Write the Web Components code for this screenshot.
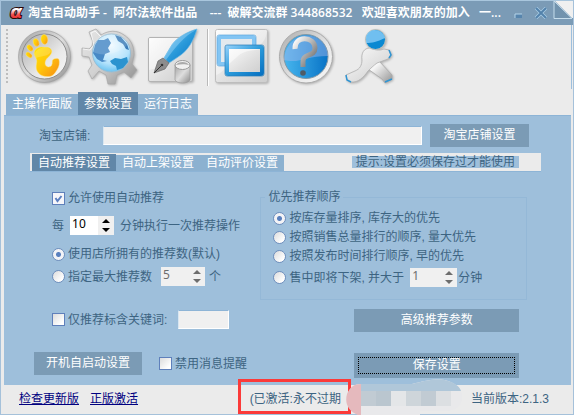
<!DOCTYPE html>
<html lang="zh-CN">
<head>
<meta charset="utf-8">
<title>淘宝自动助手</title>
<style>
  body {
    margin: 0;
    --panel: #9ebfdb;
    --line: #8db4d6;
    --chrome: #ebebeb;
    --button: #7b9bb5;
    --tab: #8cb1d0;
    --tab-active: #6187a8;
    --text: #3d6482;
    font: 12px/14px "Liberation Sans", "Noto Sans CJK SC", sans-serif;
    color: var(--text);
  }
</style>
</head>
<body>
<helper-app></helper-app>

<script>
class TitleBar extends HTMLElement {
  constructor() {
    super();
    this.attachShadow({ mode: 'open' });
    this.shadowRoot.innerHTML = `
      <style>
        :host {
          display: flex;
          height: 25px;
          box-sizing: border-box;
          border-top: 1px solid #a9c6dd;
          background: #7b9bb6;
          color: #fff;
        }
        .logo { margin: 0 0 0 7px; flex: none; }
        h1 {
          flex: 1;
          min-width: 0;
          margin: 0;
          font: 600 12px/24px "Open Sans", "Noto Sans CJK SC", sans-serif;
          white-space: pre;
          overflow: hidden;
          text-overflow: ellipsis;
        }
        button {
          width: 22px;
          padding: 0;
          border: 0;
          background: none;
        }
        button svg { display: block; margin: 0 auto; }
        .curl { flex: none; margin-left: 1px; }
      </style>
      <svg class="logo" width="20" height="24" viewBox="0 0 20 24" aria-hidden="true">
        <defs>
          <linearGradient id="red" x1="0" y1="0" x2="0" y2="1">
            <stop offset=".4" stop-color="#fff"/><stop offset=".65" stop-color="#f05050"/><stop offset="1" stop-color="#e01010"/>
          </linearGradient>
        </defs>
        <text x="2" y="17" font-family="DejaVu Sans, sans-serif" font-size="18" font-weight="bold" font-style="italic"
          fill="url(#red)" stroke="#2a0808" stroke-width="2" paint-order="stroke">α</text>
      </svg>
      <h1><slot></slot></h1>
      <button aria-label="最小化"><svg width="10" height="12"><path d="M1 7h7v4H1z" fill="#5785ad"/><path d="M1 11V7h7" fill="none" stroke="#b5d4ea"/></svg></button>
      <button aria-label="关闭"><svg width="14" height="12"><path d="M2 1l10 10M12 1L2 11" stroke="#a9cde6" stroke-width="3.4"/><path d="M2 1l10 10M12 1L2 11" stroke="#5382ab" stroke-width="2"/></svg></button>
      <svg class="curl" width="20" height="24" viewBox="0 0 20 24">
        <path d="M1-1L19 17H20V-1z" fill="#f0f0f0"/>
        <path d="M1 0V17.500H19z" fill="#7193ae" stroke="#c5ddec"/>
      </svg>
    `;
  }
}

class TabStrip extends HTMLElement {
  constructor() {
    super();
    this.attachShadow({ mode: 'open' });
    const tabs = this.getAttribute('tabs').split(',');
    this.shadowRoot.innerHTML = `
      <style>
        :host { display: flex; align-items: flex-end; }
        button {
          font: inherit;
          line-height: var(--tab-line, 16px);
          color: #fff;
          background: var(--tab);
          border: 0;
          padding: var(--tab-pad, 0) 6px;
          white-space: nowrap;
        }
        button[aria-selected=true] {
          background: var(--tab-active);
          padding-top: var(--tab-pad-active, 1px);
        }
      </style>
      ${tabs.map(t => `<button role="tab">${t}</button>`).join('')}
    `;
    this.buttons = [...this.shadowRoot.querySelectorAll('button')];
    this.buttons.forEach((b, i) => b.addEventListener('click', () => this.select(i)));
    this.select(Number(this.getAttribute('selected')));
  }

  select(index) {
    this.buttons.forEach((b, i) => b.setAttribute('aria-selected', i === index));
  }
}

class FlatButton extends HTMLElement {
  constructor() {
    super();
    this.attachShadow({ mode: 'open' });
    this.shadowRoot.innerHTML = `
      <style>
        :host { display: block; }
        button {
          display: block;
          width: 100%;
          height: 23px;
          padding: 0 0 2px;
          border: 0;
          background: var(--button);
          color: #fff;
          font: inherit;
          white-space: nowrap;
        }
        :host([current]) button {
          height: 25px;
          outline: 1px dotted #000;
          outline-offset: -5px;
        }
      </style>
      <button><slot></slot></button>
    `;
  }
}

class ChoiceBox extends HTMLElement {
  constructor() {
    super();
    this.attachShadow({ mode: 'open' });
    const type = this.getAttribute('type');
    this.shadowRoot.innerHTML = `
      <style>
        :host { display: block; }
        label { display: flex; align-items: center; gap: 3px; white-space: nowrap; }
        input {
          appearance: none;
          box-sizing: border-box;
          flex: none;
          width: 13px;
          height: 13px;
          margin: 0;
          border: 1px solid #5f80bb;
          background: linear-gradient(135deg, #dcdcdc, #fff 80%);
        }
        input[type=checkbox]:checked {
          background: #f6f6fa url("data:image/svg+xml,%3Csvg xmlns='http://www.w3.org/2000/svg' viewBox='0 0 11 11'%3E%3Cpath d='M2.500 5l2 3L8.500 3' fill='none' stroke='%235b7fc0' stroke-width='2'/%3E%3C/svg%3E");
        }
        input[type=radio] { border-radius: 50%; border: 1px solid #6f8fbd; }
        input[type=radio]:checked {
          background: radial-gradient(circle, #5a80be 2px, #f3f3f6 3px);
        }
      </style>
      <label><input type="${type}"><slot></slot></label>
    `;
    this.input = this.shadowRoot.querySelector('input');
    this.input.checked = this.hasAttribute('checked');
    // radios sit in separate shadow roots, so the group is kept in step here
    this.input.addEventListener('change', () => {
      if (type !== 'radio') return;
      const group = this.getAttribute('group');
      this.getRootNode().querySelectorAll(`choice-box[group=${group}]`).forEach(c => {
        if (c !== this) c.input.checked = false;
      });
    });
  }
}

class TextField extends HTMLElement {
  constructor() {
    super();
    this.attachShadow({ mode: 'open' });
    this.shadowRoot.innerHTML = `
      <style>
        :host { display: block; }
        label { display: flex; align-items: center; gap: 13px; white-space: nowrap; }
        input {
          flex: 1;
          min-width: 0;
          height: 19px;
          box-sizing: border-box;
          border: 1px solid #fff;
          border-top-color: var(--line);
          border-left-color: #d8e6f1;
          background: #f0f0f0;
          font: inherit;
        }
      </style>
      <label><slot></slot><input type="text" aria-label="${this.getAttribute('name')}"></label>
    `;
  }
}

class SpinBox extends HTMLElement {
  constructor() {
    super();
    this.attachShadow({ mode: 'open' });
    const off = this.hasAttribute('disabled') ? 'disabled' : '';
    this.shadowRoot.innerHTML = `
      <style>
        :host { display: flex; width: 44px; height: 19px; background: #fff; color: #000; flex: none; }
        :host([disabled]) { background: #f0f0f0; color: #6d6d6d; }
        input {
          appearance: textfield;
          flex: 1;
          min-width: 0;
          padding: 0 0 4px 2px;
          border: 0;
          background: none;
          color: inherit;
          font: 12px/14px "Noto Sans", sans-serif;
        }
        input::-webkit-inner-spin-button { display: none; }
        div { display: flex; flex-direction: column; width: 16px; background: #f0f0f0; }
        button { flex: 1; padding: 0; border: 0; background: none; color: inherit; min-height: 0; }
        svg { display: block; margin: auto; fill: currentColor; }
      </style>
      <input type="number" value="${this.getAttribute('value')}" aria-label="${this.getAttribute('name')}" ${off}>
      <div>
        <button aria-label="增加" ${off}><svg width="8" height="4"><path d="M4 0l4 4H0z"/></svg></button>
        <button aria-label="减少" ${off}><svg width="8" height="4"><path d="M0 0h8L4 4z"/></svg></button>
      </div>
    `;
    const input = this.shadowRoot.querySelector('input');
    const [up, down] = this.shadowRoot.querySelectorAll('button');
    up.addEventListener('click', () => input.stepUp());
    down.addEventListener('click', () => input.stepDown());
  }
}

class ToolBar extends HTMLElement {
  constructor() {
    super();
    this.attachShadow({ mode: 'open' });
    this.shadowRoot.innerHTML = `
      <style>
        :host {
          display: flex;
          align-items: center;
          gap: 8px;
          height: 64px;
          padding-left: 5px;
          margin-right: 1px;
          border-right: 1px solid #9dbfdd;
        }
        .grip { width: 2px; height: 56px; margin-right: 1px;
          background: repeating-linear-gradient(#bdbdbd 0 2px, transparent 2px 4px); }
        .rule { width: 1px; height: 57px; margin: 0 -3px 0 -2px; background: #b9b9b9; border-right: 1px solid #fff; }
        button { width: 56px; height: 60px; padding: 0; border: 0; background: none; }
        svg { display: block; filter: drop-shadow(1px 1px 1px rgba(0, 0, 0, 0.25)); }
      </style>
      <svg width="0" height="0" style="position:absolute">
        <defs>
          <linearGradient id="steel" x1="0" y1="0" x2="1" y2="1"><stop stop-color="#a2a2a2"/><stop offset=".5" stop-color="#dedede"/><stop offset="1" stop-color="#8c8c8c"/></linearGradient>
          <linearGradient id="cog" x1="0" y1="0" x2="1" y2="1"><stop stop-color="#e6e6e6"/><stop offset=".5" stop-color="#d2d2d2"/><stop offset="1" stop-color="#8c8c8c"/></linearGradient>
          <linearGradient id="pale" x1="0" y1="0" x2="1" y2="1"><stop stop-color="#fcfcfc"/><stop offset=".6" stop-color="#dedede"/><stop offset="1" stop-color="#cdcdcd"/></linearGradient>
          <linearGradient id="limb" x1="0" y1="0" x2="1" y2="1"><stop offset=".3" stop-color="#f6f6f6"/><stop offset="1" stop-color="#929292"/></linearGradient>
          <linearGradient id="dish" x1="0" y1="0" x2="1" y2="1"><stop stop-color="#aaa"/><stop offset=".6" stop-color="#e8e8e8"/><stop offset="1" stop-color="#f7f7f7"/></linearGradient>
          <linearGradient id="gold" x1="0" y1="0" x2="1" y2="1"><stop stop-color="#ffe500"/><stop offset=".5" stop-color="#ffc40c"/><stop offset="1" stop-color="#f68b14"/></linearGradient>
          <linearGradient id="blue" x1="0" y1="0" x2="1" y2="1"><stop stop-color="#8ccdf8"/><stop offset=".5" stop-color="#2a9ada"/><stop offset="1" stop-color="#0872c2"/></linearGradient>
          <linearGradient id="deep" x1="0" y1="0" x2="1" y2="0"><stop stop-color="#47b6ee"/><stop offset="1" stop-color="#0873c6"/></linearGradient>
          <radialGradient id="sea" cx=".5" cy=".3" r=".8"><stop stop-color="#f0faff"/><stop offset=".6" stop-color="#b5e3fc"/><stop offset="1" stop-color="#48b4ec"/></radialGradient>
          <linearGradient id="mark" x1="0" y1="0" x2="1" y2="1"><stop stop-color="#fff"/><stop offset=".45" stop-color="#b8b8b8"/><stop offset="1" stop-color="#5e5e5e"/></linearGradient>
        </defs>
      </svg>
      <span class="grip"></span>
      <button aria-label="主页">
        <svg width="56" height="60">
          <circle cx="27.500" cy="29.500" r="26" fill="url(#steel)" stroke="#999" stroke-width=".6"/>
          <circle cx="27.500" cy="29.500" r="22.500" fill="url(#dish)" stroke="#8d8d8d"/>
          <g fill="url(#gold)" stroke="#ffe97a" stroke-width=".4">
            <ellipse cx="27.300" cy="12.500" rx="3.400" ry="5" transform="rotate(-8 27 12)"/>
            <ellipse cx="19" cy="15.500" rx="2.800" ry="4" transform="rotate(-20 19 15)"/>
            <ellipse cx="13" cy="21" rx="2.400" ry="3.600" transform="rotate(-40 13 21)"/>
            <ellipse cx="12" cy="28" rx="2.100" ry="3.500" transform="rotate(-50 12 28)"/>
            <path d="M17.300 27C17 23 20 20.300 24 20L31 20.300C36 22 35.500 26 32.500 29C29.500 31.500 27.500 34 28.300 37.500C29 40 32.500 41 34.500 38.500C36 36 34.500 34 36 32.500C38 31 41.500 31 42 32.500C42.800 36 42 39.500 40.500 42C38 46 36.500 49 32 49.500C27 50 23.500 48.500 21.500 46C18 42 19.500 38 19.800 34.500C20 31.500 18 30.500 17.300 27Z"/>
          </g>
          <path d="M17.500 28C18 20 33 18 34 24C33 29 24 29 19 31z" fill="#fff" opacity=".18"/>
        </svg>
      </button>
      <button aria-label="网络设置">
        <svg width="58" height="60">
          <path d="M1 21L8 22L11 19L12 15L8 5L15 2L20 8C28 3 36 3 43 8C51 13 53 21 53 28L51 37L56 43L50 51L43 45L36 48L34 57H27L25 48L18 44L11 52L7 44L11 38L8 30L1 29Z" fill="url(#cog)" stroke="#a6a6a6" stroke-width=".7"/>
          <path d="M2 22L9 23L13 18L10 6L14 4L20 10" fill="none" stroke="#fff" opacity=".7"/>
          <circle cx="30.500" cy="26" r="19" fill="url(#sea)" stroke="#9abed4"/>
          <path d="M14 18L17 13L23 13L27 11L30 16L27 21L29 25L24 27L22 33L26 34L21 35L16 32L12 26Z" fill="#4889c6"/>
          <path d="M34 8L40 10L46 17L48 23L45 22L42 17L37 14Z" fill="#3b7cb8"/>
          <path d="M29 34L34 31L40 32L46 30L47 35L42 41L36 43L35 39L31 37Z" fill="#2b93cf"/>
          <path d="M12 25C22 30 38 27 47 17C43 5 20 3 14 15z" fill="#fff" opacity=".16"/>
        </svg>
      </button>
      <button aria-label="编辑">
        <svg width="56" height="60">
          <rect x="3.500" y="10.500" width="44" height="44" rx="1.500" fill="url(#pale)" stroke="#b3b3b3"/>
          <path d="M4 11H46C34 21 28 38 4 43z" fill="#fff" opacity=".4"/>
          <path d="M52 2C42 5 30 11 25 21L19 31L24 36L33 30C43 24 49 13 52 2Z" fill="url(#blue)" stroke="#6dbbe8" stroke-width=".7"/>
          <path d="M51 3C39 9 30 21 21 33L19 31L25 21C30 11 41 6 51 3Z" fill="#92d2f5" opacity=".5"/>
          <path d="M18 31L24 36L20 42L9 46L13 34Z" fill="#8d8d8d" stroke="#666" stroke-width=".7"/>
          <path d="M9 46L16 39" stroke="#333"/><circle cx="17" cy="38" r="1.300" fill="#333"/>
          <path d="M30 38V53C32 57 43 57 45 53V38Z" fill="url(#steel)" stroke="#999" stroke-width=".7"/>
          <ellipse cx="37.500" cy="38" rx="7.500" ry="4.500" fill="#f0f0f0" stroke="#999"/>
          <path d="M31 38C33 34 42 34 44 38C41 37 35 37 31 38z" fill="#aaa"/>
        </svg>
      </button>
      <span class="rule"></span>
      <button aria-label="窗口">
        <svg width="56" height="60">
          <rect x="1.500" y="2.500" width="52" height="53" rx="2" fill="url(#pale)" stroke="#bdbdbd"/>
          <path d="M53 3C51 25 35 18 23 28C13 36 10 46 2 48V3z" fill="#fff" opacity=".35"/>
          <rect x="5" y="10" width="35" height="27" rx="1.500" fill="#e3e9ee" stroke="#83c5f3" stroke-width="4"/>
          <rect x="3" y="8" width="39" height="31" rx="2" fill="none" stroke="#5da8de" stroke-width=".7"/>
          <rect x="13" y="20" width="35" height="27" rx="1.500" fill="url(#pale)" stroke="url(#blue)" stroke-width="4"/>
          <rect x="11" y="18" width="39" height="31" rx="2" fill="none" stroke="#267cb8" stroke-width=".7"/>
          <path d="M15 22H46C39 24 31 23 24 29L15 37z" fill="#fff" opacity=".5"/>
        </svg>
      </button>
      <button aria-label="帮助">
        <svg width="56" height="60">
          <circle cx="28" cy="29.500" r="26.500" fill="url(#dish)" stroke="#aaa"/>
          <circle cx="28" cy="29.500" r="22" fill="url(#deep)" stroke="#8198a6"/>
          <path d="M6 33C21 37 28 29 50 29C48 2 9 0 6 33z" fill="#a9b9eb" opacity=".45"/>
          <path d="M17 22C16 8 37 9 37 21C37 30 25 26 25 34V40" fill="none" stroke="url(#mark)" stroke-width="5"/>
          <circle cx="25" cy="46" r="2.800" fill="#505b65"/>
        </svg>
      </button>
      <button aria-label="退出">
        <svg width="56" height="60">
          <path d="M28 35L36 33L50 48L50 52L43 56L40 52L26 42Z" fill="url(#limb)" stroke="#aaa" stroke-width=".8"/>
          <path d="M20 33C19 26 22 21 28 21C33 23 37 24 42 22L47 23L49 28L46 32L35 36C31 39 29 41 26 44C22 50 16 56 9 55L5 53L4 48L13 44C18 42 20 38 20 33Z" fill="url(#pale)" stroke="#b0b0b0" stroke-width=".8"/>
          <path d="M4 48L5 53L9 55M43 55L50 52M47 23L49 28L47 31" fill="none" stroke="#3095d3" stroke-width="1.500"/>
          <circle cx="33.500" cy="12.500" r="10" fill="#0a89d2" stroke="#c4c4bd"/>
          <path d="M24 16C30 16 35 15 43 11C41 1 26 0 24 10z" fill="#8acdf8" opacity=".8"/>
        </svg>
      </button>
    `;
  }
}

class OrderGroup extends HTMLElement {
  constructor() {
    super();
    this.attachShadow({ mode: 'open' });
    this.shadowRoot.innerHTML = `
      <style>
        :host { display: block; }
        fieldset {
          margin: 0;
          padding: 7px 0 12px 12px;
          border: 1px solid #94b8d7;
          min-width: 0;
        }
        legend { margin-left: -8px; padding: 0 3px; }
        div { display: flex; flex-direction: column; gap: 5px; }
      </style>
      <fieldset><legend>${this.getAttribute('legend')}</legend><div><slot></slot></div></fieldset>
    `;
  }
}

class StatusBar extends HTMLElement {
  constructor() {
    super();
    this.attachShadow({ mode: 'open' });
    this.shadowRoot.innerHTML = `
      <style>
        :host {
          display: flex;
          align-items: center;
          height: 29px;
          box-sizing: border-box;
          padding: 0 24px 2px 18px;
        }
        a { color: #000080; margin-right: 11px; text-decoration: underline; }
        .state { position: relative; margin: 0 0 0 auto; }
        .state span { position: relative; }
        .version { margin-left: 130px; }
        /* drawn over the panel edge */
        .frame { position: absolute; inset: -13px -10px -8px -12px; border: 3px solid #fb3a39; }
        .smudge { position: absolute; left: 96px; top: -14px; }
      </style>
      <a href="#update">检查更新版</a>
      <a href="#activate">正版激活</a>
      <div class="state">
        <div class="frame"></div>
        <svg class="smudge" width="118" height="38" viewBox="0 0 118 38">
          <path d="M2 16C4 9 9 6 15 6H66C82 2 92 0 102 3C112 6 117 13 116 21C115 29 109 32 102 33H74V38H18C7 37-2 27 2 16Z" fill="#e9e9eb"/>
          <path d="M15 6H66C82 2 92 0 102 3C109 5 114 9 115 13H15Z" fill="#b0c7d9"/>
          <path d="M15 6V38C4 35-2 27 1 16C4 9 8 6 15 6Z" fill="#e5b9bd"/>
          <path d="M15 13h15v15H15zM75 13h15v15H75z" fill="#c1cbd3"/>
          <path d="M30 13h15v15H30z" fill="#bac6cf"/>
          <path d="M45 13h15v15H45z" fill="#e4e6e8"/>
          <path d="M60 13h15v15H60z" fill="#ced5da"/>
          <path d="M90 13h15v15H90z" fill="#dcdfe2"/>
        </svg>
        <span>(已激活:永不过期</span>
      </div>
      <div class="version">当前版本:2.1.3</div>
    `;
  }
}

class HelperApp extends HTMLElement {
  constructor() {
    super();
    this.attachShadow({ mode: 'open' });
    this.shadowRoot.innerHTML = `
      <style>
        :host {
          display: flex;
          flex-direction: column;
          min-height: 100vh;
          box-sizing: border-box;
          border: 1px solid #a5c1da;
          border-top: 0;
          background: var(--chrome);
        }
        .pages { margin: 3px 0 0 5px; --tab-line: 15px; --tab-pad: 3px; --tab-pad-active: 5px; }
        main {
          flex: 1;
          margin: 0 2px 0 3px;
          border-top: 1px solid var(--line);
          background: var(--panel);
        }
        .shop { display: flex; align-items: center; gap: 8px; padding: 8px 42px 6px 35px; }
        .shop text-field { flex: 1; }
        .strip {
          display: flex;
          align-items: flex-end;
          justify-content: space-between;
          height: 19px;
          box-sizing: border-box;
          margin: 0 30px 0 26px;
          padding: 0 22px 0 2px;
          border-bottom: 1px solid var(--line);
          background: var(--chrome);
        }
        .hint { background: var(--panel); padding: 0 4px; margin-bottom: 3px; line-height: 12px; white-space: nowrap; }
        .columns { display: grid; grid-template-columns: 6fr 7fr; padding: 0 44px 0 28px; }
        .left, .right { display: flex; flex-direction: column; min-width: 0; }
        .left { padding-top: 19px; }
        .left > * { margin-left: 20px; }
        .right { padding-top: 18px; }
        .row { display: flex; align-items: center; gap: 4px; white-space: nowrap; }
        .every { margin-top: 11px; gap: 6px; }
        .own { margin-top: 12px; }
        .most { margin-top: 6px; }
        .most spin-box { margin-left: 5px; }
        .words { margin-top: 24px; gap: 11px; }
        .words text-field { width: 51px; }
        .left .boot { margin: 23px 0 0 2px; gap: 17px; }
        .within { gap: 1px; }
        .within spin-box { margin-left: 5px; width: 47px; }
        .right flat-button { margin: 9px 8px 0 94px; }
        .right flat-button + flat-button { margin-top: 21px; }
      </style>
      <title-bar>淘宝自动助手 -  阿尔法软件出品    ---  破解交流群 344868532   欢迎喜欢朋友的加入   一...</title-bar>
      <tool-bar></tool-bar>
      <tab-strip class="pages" tabs="主操作面版,参数设置,运行日志" selected="1"></tab-strip>
      <main>
        <div class="shop">
          <text-field name="淘宝店铺">淘宝店铺:</text-field>
          <flat-button style="width:99px">淘宝店铺设置</flat-button>
        </div>
        <div class="strip">
          <tab-strip tabs="自动推荐设置,自动上架设置,自动评价设置" selected="0"></tab-strip>
          <span class="hint">提示:设置必须保存过才能使用</span>
        </div>
        <div class="columns">
          <div class="left">
            <choice-box type="checkbox" checked>允许使用自动推荐</choice-box>
            <div class="row every">每 <spin-box name="间隔分钟" value="10"></spin-box> 分钟执行一次推荐操作</div>
            <choice-box class="own" type="radio" group="amount" checked>使用店所拥有的推荐数(默认)</choice-box>
            <div class="row most">
              <choice-box type="radio" group="amount">指定最大推荐数</choice-box>
              <spin-box name="最大推荐数" value="5" disabled></spin-box>个
            </div>
            <div class="row words">
              <choice-box type="checkbox">仅推荐标含关键词:</choice-box>
              <text-field name="关键词"></text-field>
            </div>
            <div class="row boot">
              <flat-button style="width:108px">开机自启动设置</flat-button>
              <choice-box type="checkbox">禁用消息提醒</choice-box>
            </div>
          </div>
          <div class="right">
            <order-group legend="优先推荐顺序">
              <choice-box type="radio" group="order" checked>按库存量排序, 库存大的优先</choice-box>
              <choice-box type="radio" group="order">按照销售总量排行的顺序, 量大优先</choice-box>
              <choice-box type="radio" group="order">按照发布时间排行顺序, 早的优先</choice-box>
              <div class="row within">
                <choice-box type="radio" group="order">售中即将下架, 并大于</choice-box>
                <spin-box name="下架分钟" value="1" disabled></spin-box>分钟
              </div>
            </order-group>
            <flat-button>高级推荐参数</flat-button>
            <flat-button current>保存设置</flat-button>
          </div>
        </div>
      </main>
      <status-bar></status-bar>
    `;
  }
}

customElements.define('title-bar', TitleBar);
customElements.define('tab-strip', TabStrip);
customElements.define('flat-button', FlatButton);
customElements.define('choice-box', ChoiceBox);
customElements.define('text-field', TextField);
customElements.define('spin-box', SpinBox);
customElements.define('tool-bar', ToolBar);
customElements.define('order-group', OrderGroup);
customElements.define('status-bar', StatusBar);
customElements.define('helper-app', HelperApp);
</script>
</body>
</html>
